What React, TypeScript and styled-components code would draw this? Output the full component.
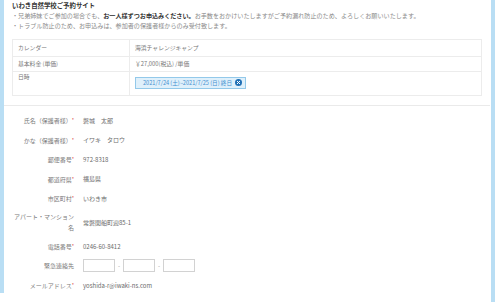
import React from "react";
import styled, { createGlobalStyle } from "styled-components";

const Global = createGlobalStyle`
  html, body { margin: 0; padding: 0; background: #ffffff; }
  body { font-family: "Noto Sans CJK JP", "Noto Sans", sans-serif; }
  * { box-sizing: border-box; }
`;

const Shell = styled.div`
  display: flex;
  width: 495px;
  height: 302px;
  overflow: hidden;
  background: #fff;
`;

const LeftRail = styled.div`
  width: 4px;
  height: 293px;
  background: #b9def4;
  flex: none;
`;

const RightRail = styled.div`
  width: 4px;
  margin-left: 1px;
  background: #b9def4;
  flex: none;
`;

const Main = styled.main`
  flex: 1;
  display: flex;
  flex-direction: column;
  min-width: 0;
`;

const Header = styled.section`
  padding: 1px 8px 0 8px;
  display: flex;
  flex-direction: column;
`;

const Title = styled.h1`
  margin: 0;
  font-size: 6.4px;
  line-height: 10px;
  font-weight: 700;
  color: #333;
`;

const Notes = styled.ul`
  margin: 0;
  padding: 0;
  list-style: none;
`;

const Note = styled.li`
  font-size: 6.1px;
  line-height: 9.5px;
  color: #8a8a8a;
  white-space: nowrap;
  strong { color: #333; font-weight: 700; }
`;

const InfoTable = styled.div`
  margin: 9px 0 0 0;
  width: 470px;
  border: 1px solid #ececec;
  display: grid;
  grid-template-columns: 117px 1fr;
  font-size: 5.8px;
  color: #777;
`;

const Cell = styled.div<{ $h: number; $top?: number; $label?: boolean; $last?: boolean }>`
  height: ${(p) => p.$h}px;
  padding: ${(p) => (p.$top !== undefined ? `${p.$top}px 5px 0 5px` : "0 5px")};
  display: flex;
  align-items: ${(p) => (p.$top !== undefined ? "flex-start" : "center")};
  line-height: 8px;
  border-bottom: ${(p) => (p.$last ? "none" : "1px solid #ececec")};
  border-right: ${(p) => (p.$label ? "1px solid #ececec" : "none")};
`;

const DateChip = styled.span`
  display: inline-flex;
  align-items: center;
  gap: 3px;
  height: 12.5px;
  padding: 0 3px 0 7px;
  background: #dff0fb;
  border: 1px solid #93c9ea;
  color: #3f8fcf;
  font-size: 5.6px;
  white-space: nowrap;
`;

const Divider = styled.hr`
  margin: 9px 0 0 0;
  border: none;
  border-top: 1px solid #eaeaea;
`;

const Form = styled.div`
  padding: 8px 0 0 8px;
  display: flex;
  flex-direction: column;
  gap: 6.5px;
`;

const FormRow = styled.div`
  display: grid;
  grid-template-columns: 62px 1fr;
  column-gap: 9px;
  align-items: center;
  min-height: 13px;
  font-size: 6px;
  color: #7a7a7a;
`;

const Label = styled.div`
  text-align: right;
  line-height: 11px;
`;

const Req = styled.span`
  color: #dd4b4b;
  font-size: 5px;
  vertical-align: 1px;
`;

const Value = styled.div`
  line-height: 11px;
  color: #6a6a6a;
  white-space: nowrap;
`;

const Inputs = styled.div`
  display: flex;
  align-items: center;
  gap: 3px;
`;

const Box = styled.div`
  width: 32px;
  height: 13px;
  border: 1px solid #d2d2d2;
  background: #fff;
`;

const Dash = styled.span`
  color: #999;
  font-size: 6px;
`;

const CloseIcon = () => (
  <svg width="7" height="7" viewBox="0 0 14 14" aria-hidden>
    <circle cx="7" cy="7" r="7" fill="#1f6fb5" />
    <path d="M4.5 4.5 L9.5 9.5 M9.5 4.5 L4.5 9.5" stroke="#fff" strokeWidth="2" strokeLinecap="round" />
  </svg>
);

const rows: { label: string; req?: boolean; value?: string; inputs?: boolean }[] = [
  { label: "氏名（保護者様）", req: true, value: "磐城　太郎" },
  { label: "かな（保護者様）", req: true, value: "イワキ　タロウ" },
  { label: "郵便番号", req: true, value: "972-8318" },
  { label: "都道府県", req: true, value: "福島県" },
  { label: "市区町村", req: true, value: "いわき市" },
  { label: "アパート・マンション名", value: "常磐関船町迎85-1" },
  { label: "電話番号", req: true, value: "0246-60-8412" },
  { label: "緊急連絡先", inputs: true },
  { label: "メールアドレス", req: true, value: "yoshida-r@iwaki-ns.com" },
];

export default function App() {
  return (
    <>
      <Global />
      <Shell>
        <LeftRail />
        <Main>
          <Header>
            <Title>いわき自然学校ご予約サイト</Title>
            <Notes>
              <Note>
                ・兄弟姉妹でご参加の場合でも、<strong>お一人様ずつお申込みください。</strong>お手数をおかけいたしますがご予約漏れ防止のため、よろしくお願いいたします。
              </Note>
              <Note>・トラブル防止のため、お申込みは、参加者の保護者様からのみ受付致します。</Note>
            </Notes>
            <InfoTable>
              <Cell $h={16.5} $label>カレンダー</Cell>
              <Cell $h={16.5}>海浜チャレンジキャンプ</Cell>
              <Cell $h={15} $label>基本料金 (単価)</Cell>
              <Cell $h={15}>￥27,000(税込) /単価</Cell>
              <Cell $h={23} $top={1} $label $last>日時</Cell>
              <Cell $h={23} $top={5} $last>
                <DateChip>
                  2021/7/24 (土)~2021/7/25 (日) 終日 <CloseIcon />
                </DateChip>
              </Cell>
            </InfoTable>
          </Header>
          <Divider />
          <Form>
            {rows.map((r) => (
              <FormRow key={r.label}>
                <Label>
                  {r.label}
                  {r.req && <Req>*</Req>}
                </Label>
                {r.inputs ? (
                  <Inputs>
                    <Box />
                    <Dash>-</Dash>
                    <Box />
                    <Dash>-</Dash>
                    <Box />
                  </Inputs>
                ) : (
                  <Value>{r.value}</Value>
                )}
              </FormRow>
            ))}
          </Form>
        </Main>
        <RightRail />
      </Shell>
    </>
  );
}
